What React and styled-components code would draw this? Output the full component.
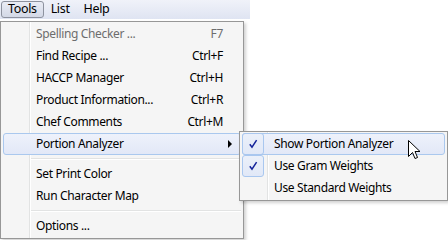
import { createGlobalStyle } from 'styled-components';
import styled from 'styled-components';

const GlobalStyle = createGlobalStyle`
    html, body {
        margin: 0;
        padding: 0;
        background: #ffffff;
    }
    body {
        font-family: 'Noto Sans', 'Open Sans', sans-serif;
        font-size: 12px;
        letter-spacing: -0.35px;
        color: #000000;
    }
`;

const Screen = styled.div`
    position: relative;
    width: 448px;
    height: 240px;
    overflow: hidden;
    background: #ffffff;
`;

const MenuBar = styled.div`
    display: flex;
    align-items: center;
    width: 250px;
    height: 20px;
    padding: 0 1px;
    box-sizing: border-box;
    background: linear-gradient(#f0f2f9, #dfe4f2);
    border-bottom: 1px solid #ffffff;
`;

const BarItem = styled.div`
    display: flex;
    align-items: center;
    height: 17px;
    padding: 0 6px;
    box-sizing: border-box;
    border: 1px solid ${({ $open }) => ($open ? '#8d929f' : 'transparent')};
    border-radius: 3px;
    background: ${({ $open }) =>
        $open ? 'linear-gradient(#e9ecf5, #d3d8e6)' : 'transparent'};
    font-size: 12.5px;
    line-height: 1;
`;

const Dropdown = styled.div`
    position: absolute;
    top: 21px;
    left: 0;
    width: 244px;
    padding: 1px 2px;
    box-sizing: border-box;
    border: 1px solid #979797;
    background: linear-gradient(
            to right,
            transparent 28px,
            #e2e3e3 28px,
            #e2e3e3 29px,
            #ffffff 29px,
            #ffffff 30px,
            transparent 30px
        ),
        #f5f5f5;
    box-shadow: 2px 2px 3px rgba(0, 0, 0, 0.18);
`;

const Item = styled.div`
    position: relative;
    display: grid;
    grid-template-columns: 1fr auto 17px;
    align-items: center;
    height: 22px;
    padding-left: ${({ $indent }) => $indent}px;
    box-sizing: border-box;
    border: 1px solid ${({ $hot }) => ($hot ? '#aac8ee' : 'transparent')};
    border-radius: 3px;
    background: ${({ $hot }) =>
        $hot ? 'linear-gradient(#eef2fb, #e2e8f7)' : 'transparent'};
    color: ${({ $disabled }) => ($disabled ? '#6d6d6d' : '#000000')};
    white-space: nowrap;
`;

const Label = styled.span`
    line-height: 20px;
`;

const Shortcut = styled.span`
    line-height: 20px;
    text-align: right;
`;

const Arrow = styled.span`
    width: 0;
    height: 0;
    margin-left: 5px;
    border-top: 4px solid transparent;
    border-bottom: 4px solid transparent;
    border-left: 4px solid #000000;
`;

const Separator = styled.div`
    height: 8px;
    margin-left: 28px;
    display: flex;
    flex-direction: column;
    justify-content: center;

    &::before {
        content: '';
        height: 1px;
        background: #e2e3e3;
    }
    &::after {
        content: '';
        height: 1px;
        background: #ffffff;
    }
`;

const SubMenu = styled.div`
    position: absolute;
    top: -3px;
    left: 235px;
    width: 209px;
    padding: 1px 2px;
    box-sizing: border-box;
    border: 1px solid #979797;
    background: linear-gradient(
            to right,
            transparent 27px,
            #e2e3e3 27px,
            #e2e3e3 28px,
            #ffffff 28px,
            #ffffff 29px,
            transparent 29px
        ),
        #f5f5f5;
    box-shadow: 2px 2px 3px rgba(0, 0, 0, 0.18);
    color: #000000;
`;

const SubItem = styled(Item)`
    grid-template-columns: 1fr;
`;

const CheckBox = styled.span`
    position: absolute;
    top: -1px;
    left: -1px;
    width: 22px;
    height: 22px;
    box-sizing: border-box;
    display: flex;
    align-items: center;
    justify-content: center;
    border: 1px solid #a9c7ef;
    border-radius: 3px;
    background: linear-gradient(#ebf0fa, #e1e8f7);
`;

const Cursor = styled.svg`
    position: absolute;
    left: 408px;
    top: 140px;
`;

const mainItems = [
    { label: 'Spelling Checker ...', key: 'F7', disabled: true },
    { label: 'Find Recipe ...', key: 'Ctrl+F' },
    { label: 'HACCP Manager', key: 'Ctrl+H' },
    { label: 'Product Information...', key: 'Ctrl+R' },
    { label: 'Chef Comments', key: 'Ctrl+M' },
    { label: 'Portion Analyzer', sub: true },
    { sep: true },
    { label: 'Set Print Color' },
    { label: 'Run Character Map' },
    { sep: true },
    { label: 'Options ...' },
];

const subItems = [
    { label: 'Show Portion Analyzer', checked: true, hot: true },
    { label: 'Use Gram Weights', checked: true },
    { label: 'Use Standard Weights' },
];

const Check = () => (
    <svg width="10" height="10" viewBox="0 0 10 10">
        <path
            d="M1.8 5.2 L4 8.2 L8.6 1.2"
            fill="none"
            stroke="#14239a"
            strokeWidth="1.5"
            strokeLinejoin="miter"
        />
    </svg>
);

const App = () => {
    return (
        <Screen>
            <GlobalStyle />
            <MenuBar>
                <BarItem $open>Tools</BarItem>
                <BarItem>List</BarItem>
                <BarItem>Help</BarItem>
            </MenuBar>
            <Dropdown>
                {mainItems.map((item, i) =>
                    item.sep ? (
                        <Separator key={i} />
                    ) : (
                        <Item
                            key={i}
                            $indent={32}
                            $hot={item.sub}
                            $disabled={item.disabled}
                        >
                            <Label>{item.label}</Label>
                            <Shortcut>{item.key}</Shortcut>
                            {item.sub ? <Arrow /> : <span />}
                            {item.sub && (
                                <SubMenu>
                                    {subItems.map((s) => (
                                        <SubItem
                                            key={s.label}
                                            $indent={31}
                                            $hot={s.hot}
                                        >
                                            {s.checked && (
                                                <CheckBox>
                                                    <Check />
                                                </CheckBox>
                                            )}
                                            <Label>{s.label}</Label>
                                        </SubItem>
                                    ))}
                                </SubMenu>
                            )}
                        </Item>
                    )
                )}
            </Dropdown>
            <Cursor width="13" height="20" viewBox="0 0 13 20">
                <path
                    d="M0.5 0.5 L0.5 16.5 L4.5 12.5 L7 18.5 L9.5 17.5 L7 11.5 L12 11.5 Z"
                    fill="#ffffff"
                    stroke="#000000"
                    strokeWidth="1"
                    strokeLinejoin="miter"
                />
            </Cursor>
        </Screen>
    );
};

export default App;
